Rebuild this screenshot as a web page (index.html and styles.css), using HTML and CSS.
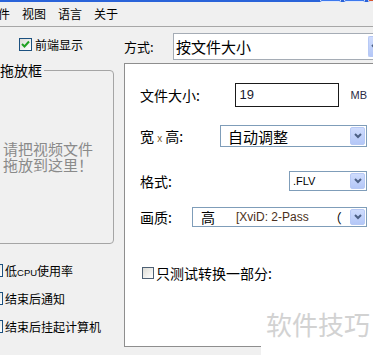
FILE: index.html
```html
<!DOCTYPE html>
<html lang="zh">
<head>
<meta charset="utf-8">
<title>视频转换</title>
<link rel="stylesheet" href="styles.css">
</head>
<body>
<div class="titlebar">
  <span class="tb-btn"></span><span class="tb-btn"></span><span class="tb-btn tb-close"></span>
</div>
<div class="menubar">
  <span class="menu-item first">文件</span>
  <span class="menu-item">视图</span>
  <span class="menu-item">语言</span>
  <span class="menu-item">关于</span>
</div>
<div class="main">
  <div class="left">
    <div class="top-check">
      <span class="cb checked"><svg width="11" height="11" viewBox="0 0 11 11"><polyline points="2,5 4.5,7.5 9,2.5" fill="none" stroke="#21a121" stroke-width="2"/></svg></span>
      <span>前端显示</span>
    </div>
    <div class="group">
      <span class="group-label">拖放框</span>
      <div class="drop-text"><div class="drop-line">请把视频文件</div><div class="drop-line">拖放到这里！</div></div>
    </div>
    <div class="opts">
      <div class="opt"><span class="cb"></span><span>低<span class="latin">CPU</span>使用率</span></div>
      <div class="opt"><span class="cb"></span><span>结束后通知</span></div>
      <div class="opt"><span class="cb"></span><span>结束后挂起计算机</span></div>
    </div>
  </div>
  <div class="right">
    <div class="mode-row">
      <span class="mode-label">方式:</span>
      <div class="combo combo-mode">
        <span class="combo-text">按文件大小</span>
        <span class="drop-btn"><svg width="8" height="6" viewBox="0 0 8 6"><polyline points="1,1 4,4 7,1" fill="none" stroke="#4d6185" stroke-width="2"/></svg></span>
      </div>
    </div>
    <div class="panel">
      <div class="row row-size">
        <span class="lbl">文件大小:</span>
        <div class="input">19</div>
        <span class="unit">MB</span>
      </div>
      <div class="row row-dim">
        <span class="lbl">宽 <span class="small-x">x</span> 高:</span>
        <div class="combo combo-dim">
          <span class="combo-text cjk15">自动调整</span>
          <span class="drop-btn"><svg width="8" height="6" viewBox="0 0 8 6"><polyline points="1,1 4,4 7,1" fill="none" stroke="#4d6185" stroke-width="2"/></svg></span>
        </div>
      </div>
      <div class="row row-fmt">
        <span class="lbl">格式:</span>
        <div class="combo combo-fmt">
          <span class="combo-text latin-text">.FLV</span>
          <span class="drop-btn"><svg width="8" height="6" viewBox="0 0 8 6"><polyline points="1,1 4,4 7,1" fill="none" stroke="#4d6185" stroke-width="2"/></svg></span>
        </div>
      </div>
      <div class="row row-q">
        <span class="lbl">画质:</span>
        <div class="combo combo-q">
          <span class="combo-text q-text">高<span class="codec">[XviD: 2-Pass</span><span class="paren">（</span></span>
          <span class="drop-btn"><svg width="8" height="6" viewBox="0 0 8 6"><polyline points="1,1 4,4 7,1" fill="none" stroke="#4d6185" stroke-width="2"/></svg></span>
        </div>
      </div>
      <div class="row row-part">
        <span class="cb cb-panel"></span>
        <span class="lbl">只测试转换一部分:</span>
      </div>
    </div>
  </div>
</div>
<div class="watermark">软件技巧</div>
</body>
</html>
```

FILE: styles.css
```css
html, body {
  margin: 0;
  padding: 0;
  overflow: hidden;
  width: 373px;
  height: 355px;
}
body {
  position: relative;
  background: #f0f0f0;
  font-family: "Noto Sans CJK SC", "DejaVu Sans", sans-serif;
  font-size: 12px;
  color: #000;
}
.titlebar {
  height: 2px;
  background: #2a63d9;
  display: flex;
  justify-content: flex-end;
  align-items: flex-end;
  overflow: hidden;
  gap: 3px;
}
.tb-btn {
  width: 19px;
  height: 1px;
  border: 1px solid #dfe8fb;
  border-top: none;
  border-radius: 0 0 3px 3px;
  background: #3c79ee;
}
.tb-close {
  width: 4px;
  border-right: none;
  background: #d8552f;
  border-radius: 0 0 0 3px;
}
.menubar {
  height: 24px;
  display: flex;
  align-items: center;
  border-bottom: 1px solid #a7a7a7;
  white-space: nowrap;
}
.menu-item {
  padding: 0 6px;
  line-height: 24px;
}
.menu-item.first {
  margin-left: -20px;
}
.main {
  display: flex;
  width: 373px;
  overflow: hidden;
}
.left {
  width: 124px;
  flex-shrink: 0;
}
.top-check {
  height: 34px;
  display: flex;
  align-items: center;
  padding-left: 19px;
  gap: 3px;
  white-space: nowrap;
}
.cb {
  width: 13px;
  height: 13px;
  box-sizing: border-box;
  border: 1px solid #1c5180;
  background: linear-gradient(135deg, #dcdcd6, #ffffff);
  display: flex;
  align-items: center;
  justify-content: center;
  flex-shrink: 0;
}
.group {
  position: relative;
  margin-top: 9px;
  margin-left: -6px;
  width: 120px;
  height: 174px;
  box-sizing: border-box;
  border: 1px solid #a5a5a5;
  border-radius: 4px;
  display: flex;
  align-items: center;
  padding-left: 8px;
}
.group-label {
  position: absolute;
  top: -11px;
  left: 5px;
  padding-right: 2px;
  background: #f0f0f0;
  font-size: 14px;
  line-height: 20px;
}
.drop-text {
  font-size: 15px;
  color: #8a8a8a;
  white-space: nowrap;
  display: flex;
  flex-direction: column;
}
.drop-line {
  height: 16px;
  line-height: 16px;
}
.opts {
  margin-top: 12px;
}
.opt {
  height: 28px;
  display: flex;
  align-items: center;
  gap: 2px;
  white-space: nowrap;
}
.opt .cb {
  margin-left: -10px;
}
.latin {
  font-family: "Liberation Sans", "DejaVu Sans", sans-serif;
  font-size: 9.5px;
}
.right {
  width: 249px;
  flex-shrink: 0;
}
.mode-row {
  height: 36px;
  box-sizing: border-box;
  padding-top: 6px;
  display: flex;
  align-items: flex-start;
}
.mode-label {
  width: 49px;
  flex-shrink: 0;
  font-size: 13px;
  line-height: 27px;
}
.combo {
  display: flex;
  align-items: center;
  box-sizing: border-box;
  border: 1px solid #7f9db9;
  background: #fff;
  overflow: hidden;
  white-space: nowrap;
  flex-shrink: 0;
}
.combo-mode {
  width: 200px;
  height: 27px;
  border-color: #a5acb5;
  border-right: none;
}
.combo-mode .combo-text {
  font-size: 15px;
  padding-left: 2px;
}
.combo-text {
  flex: 1;
  overflow: hidden;
  display: flex;
  align-items: center;
}
.drop-btn {
  align-self: stretch;
  width: 15px;
  margin: 1px;
  box-sizing: border-box;
  border: 1px solid #b7c9f5;
  border-radius: 2px;
  background: linear-gradient(#cfdcfd, #b4c7f7);
  display: flex;
  align-items: center;
  justify-content: center;
  flex-shrink: 0;
}
.combo-mode .drop-btn {
  width: 5px;
  margin: 2px 0 2px 1px;
  border-right: none;
  border-radius: 2px 0 0 2px;
  justify-content: flex-start;
  padding-left: 2px;
  overflow: hidden;
}
.combo-mode .drop-btn svg {
  flex-shrink: 0;
}
.panel {
  height: 284px;
  box-sizing: border-box;
  border: 1px solid #8e8e8e;
  border-right: none;
  background: #fff;
  padding: 0 6px 0 15px;
}
.row {
  display: flex;
  align-items: center;
  white-space: nowrap;
}
.lbl {
  font-size: 14px;
}
.small-x {
  font-family: "Liberation Sans", sans-serif;
  font-size: 10px;
  color: #7a5a2a;
}
.row-size {
  height: 24px;
  margin-top: 19px;
}
.input {
  margin-left: auto;
  width: 104px;
  height: 24px;
  box-sizing: border-box;
  border: 1px solid #1a1a1a;
  padding-left: 4px;
  font-family: "Liberation Sans", sans-serif;
  font-size: 13px;
  line-height: 22px;
  color: #1a1a2e;
}
.unit {
  margin-left: 12px;
  font-family: "Liberation Sans", sans-serif;
  font-size: 11px;
  color: #2a2a44;
}
.row-dim {
  height: 22px;
  margin-top: 18px;
}
.combo-dim {
  margin-left: auto;
  width: 147px;
  height: 22px;
}
.cjk15 {
  font-size: 15px;
  padding-left: 7px;
}
.row-fmt {
  height: 20px;
  margin-top: 24px;
}
.combo-fmt {
  margin-left: auto;
  width: 78px;
  height: 20px;
}
.latin-text {
  font-family: "Liberation Sans", sans-serif;
  font-size: 11px;
  padding-left: 3px;
}
.row-q {
  height: 20px;
  margin-top: 16px;
}
.combo-q {
  margin-left: auto;
  width: 175px;
  height: 20px;
}
.q-text {
  font-size: 14px;
  padding-left: 8px;
}
.codec {
  margin-left: 21px;
  font-family: "Liberation Sans", sans-serif;
  font-size: 12px;
  color: #4a3020;
}
.paren {
  margin-left: 20px;
  font-size: 13px;
}
.row-part {
  height: 20px;
  margin-top: 36px;
  padding-left: 2px;
  gap: 2px;
}
.cb-panel {
  width: 12px;
  height: 12px;
  border-color: #4d6074;
}
.watermark {
  position: absolute;
  left: 261px;
  top: 300px;
  right: 0;
  bottom: 0;
  background: #fff;
  padding: 11px 0 0 5px;
  font-size: 26px;
  line-height: 1;
  color: #d2d2d2;
  white-space: nowrap;
}
```
